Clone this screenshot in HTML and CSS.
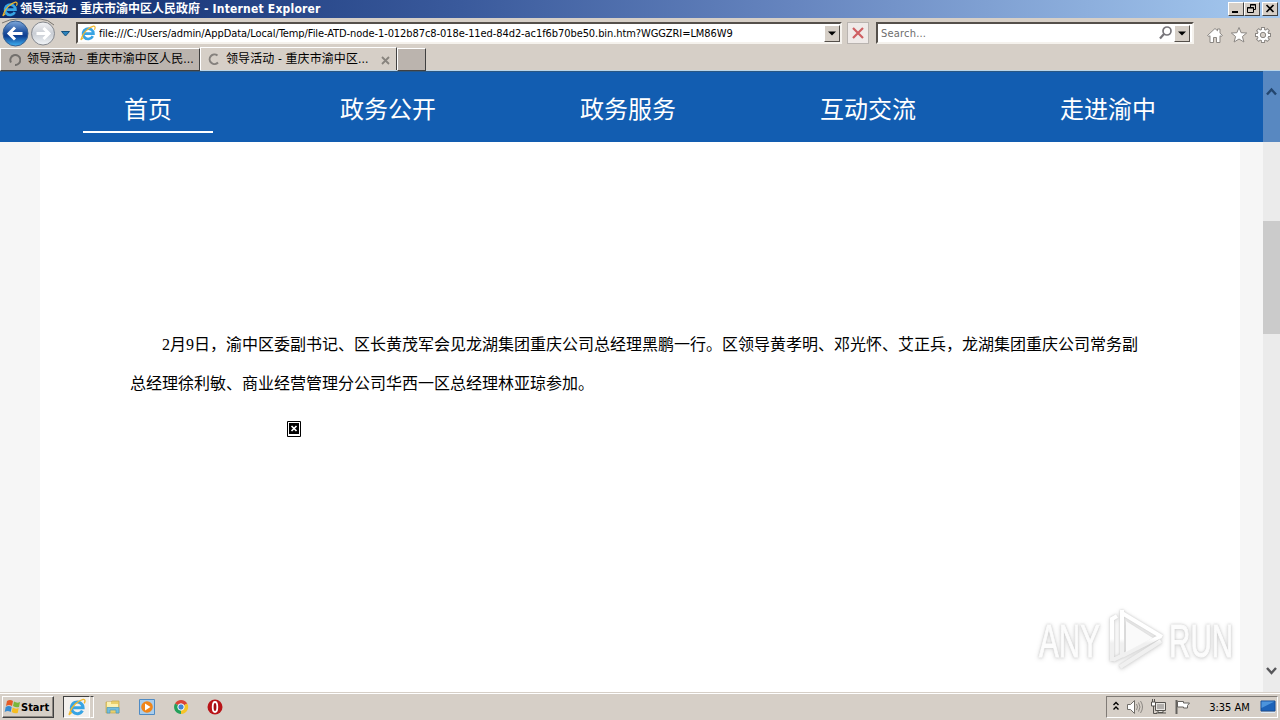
FILE: index.html
```html
<!DOCTYPE html>
<html lang="zh-CN">
<head>
    <meta charset="UTF-8">
    <meta name="viewport" content="width=device-width, initial-scale=1.0">
    <title>领导活动 - 重庆市渝中区人民政府</title>
    <link rel="stylesheet" href="styles.css">
</head>
<body>
    <svg width="0" height="0" class="defs">
        <defs>
            <linearGradient id="blueBall" x1="0" y1="0" x2="0" y2="1">
                <stop offset="0" stop-color="#7fa9dc"/>
                <stop offset=".45" stop-color="#1d4f9e"/>
                <stop offset=".6" stop-color="#0d3d90"/>
                <stop offset="1" stop-color="#3fb2f4"/>
            </linearGradient>
            <linearGradient id="greyBall" x1="0" y1="0" x2="0" y2="1">
                <stop offset="0" stop-color="#f4f4f6"/>
                <stop offset=".5" stop-color="#c9cdd4"/>
                <stop offset="1" stop-color="#f2f5f8"/>
            </linearGradient>
            <symbol id="ie" viewBox="0 0 16 16">
                <path d="M12.800 11.200A5.200 5.200 0 1 1 13.400 8.600H4" fill="none" stroke="#38a4e4" stroke-width="2.700"/>
                <path d="M3.400 12.600C.8 15.200.6 15.400 1.600 12.800C3.200 7.600 9 2.200 13.400 1.200c2.200-.3 2 1.800 1 3.600" fill="none" stroke="#f1b82d" stroke-width="1.200"/>
            </symbol>
        </defs>
    </svg>

    <div class="titlebar">
        <svg class="title-icon" width="16" height="16"><use href="#ie"/></svg>
        <span class="title-text">领导活动 - 重庆市渝中区人民政府<span class="title-app"> - Internet Explorer</span></span>
        <div class="win-buttons">
            <span class="win-btn"><svg width="14" height="12"><path d="M3 9h6" stroke="#000" stroke-width="2"/></svg></span>
            <span class="win-btn"><svg width="14" height="12"><path d="M5.500 4V1.500h5v5H9M5 2h6M2.500 4.500h6v5h-6zM2 5h7" fill="none" stroke="#000"/></svg></span>
            <span class="win-btn gap"><svg width="14" height="12"><path d="M3.500 2l7 7M10.500 2l-7 7" stroke="#000" stroke-width="1.700"/></svg></span>
        </div>
    </div>

    <div class="navbar">
        <svg class="nav-buttons" width="76" height="29" viewBox="0 0 76 29">
            <path d="M2 5Q10 1 17 1h23q8 0 14 6" fill="none" stroke="#77746f"/>
            <circle cx="15.500" cy="15.500" r="12.500" fill="url(#blueBall)" stroke="#365f91"/>
            <path d="M22.500 15.500H10M15 9.500l-6 6 6 6" fill="none" stroke="#fff" stroke-width="3"/>
            <circle cx="43" cy="15.500" r="11.500" fill="url(#greyBall)" stroke="#85888e"/>
            <path d="M36.500 15.500H48M43.500 10l5.500 5.500-5.500 5.500" fill="none" stroke="#fff" stroke-width="3"/>
            <path d="M61.500 13.500h8l-4 4.500z" fill="#2c83bd" stroke="#15527e"/>
        </svg>
        <div class="address">
            <svg width="16" height="16"><use href="#ie"/></svg>
            <span class="address-text">file:///C:/Users/admin/AppData/Local/Temp/File-ATD-node-1-012b87c8-018e-11ed-84d2-ac1f6b70be50.bin.htm?WGGZRI=LM86W9</span>
            <span class="drop"><svg width="14" height="15"><path d="M3 5.500h8L7 9.500z"/></svg></span>
        </div>
        <span class="stop"><svg width="20" height="20"><path d="M5 5l10 10M15 5L5 15" stroke="#ce5f62" stroke-width="2.200"/></svg></span>
        <div class="search">
            <span class="search-text">Search...</span>
            <svg width="14" height="14"><circle cx="8" cy="5" r="4" fill="none" stroke="#77757a" stroke-width="1.700"/><path d="M5 8L1 12.500" stroke="#77757a" stroke-width="2.200"/></svg>
            <span class="drop"><svg width="14" height="15"><path d="M3 5.500h8L7 9.500z"/></svg></span>
        </div>
        <div class="tools">
            <svg width="18" height="18"><path d="M1.500 9.500L9 2.500l2.500 2.300V3h2.500v4.200l2.500 2.300-1.500 1-1-.8v6.800h-3.500v-5h-3v5H4V9.700l-1 .8z" fill="#fff" stroke="#8b8783"/></svg>
            <svg width="18" height="18"><path d="M9 1.500l2.100 5.200 5.600.3-4.300 3.500 1.500 5.500L9 13l-4.900 3 1.500-5.500L1.300 7l5.600-.3z" fill="#fff" stroke="#8b8783"/></svg>
            <svg width="18" height="18">
                <g fill="none">
                    <path d="M9 1v16M1 9h16M3.300 3.300l11.400 11.400M14.700 3.300L3.300 14.700" stroke="#8b8783" stroke-width="4"/>
                    <circle cx="9" cy="9" r="6.200" fill="#8b8783"/>
                    <path d="M9 2v14M2 9h14M4 4l10 10M14 4L4 14" stroke="#fff" stroke-width="2.200"/>
                </g>
                <circle cx="9" cy="9" r="5.300" fill="#fff"/>
                <circle cx="9" cy="9" r="2.700" fill="#d6cfc7" stroke="#8b8783"/>
            </svg>
        </div>
    </div>

    <div class="tabs">
        <div class="tab tab-back">
            <svg width="12" height="12"><path d="M2 8.500A5 5 0 1 1 6 11" fill="none" stroke="#73706d" stroke-width="2"/></svg>
            <span>领导活动 - 重庆市渝中区人民...</span>
        </div>
        <div class="tab tab-front">
            <svg width="12" height="12"><path d="M10 9.500A4.800 4.800 0 1 1 9.500 2.500" fill="none" stroke="#85817d" stroke-width="2"/></svg>
            <span>领导活动 - 重庆市渝中区...</span>
            <svg class="tab-close" width="9" height="9"><path d="M1 1l7 7M8 1L1 8" stroke="#88847e" stroke-width="1.800"/></svg>
        </div>
        <div class="tab tab-new"></div>
    </div>

    <div class="viewport">
        <div class="page">
            <nav class="menu">
                <a class="active">首页</a>
                <a>政务公开</a>
                <a>政务服务</a>
                <a>互动交流</a>
                <a>走进渝中</a>
            </nav>
            <div class="content">
                <p class="first">2月9日，渝中区委副书记、区长黄茂军会见龙湖集团重庆公司总经理黑鹏一行。区领导黄孝明、邓光怀、艾正兵，龙湖集团重庆公司常务副</p>
                <p>总经理徐利敏、商业经营管理分公司华西一区总经理林亚琼参加。</p>
                <svg class="missing" width="14" height="16"><path d="M.5.500h13v15H.5z" fill="#fff" stroke="#000"/><path d="M2 2h10v11H2z"/><path d="M4.500 5l5 5M9.500 5l-5 5" stroke="#fff" stroke-width="1.700"/></svg>
            </div>
        </div>
        <div class="scrollbar">
            <div class="scroll-top"><svg width="17" height="17"><path d="M4 11.500L8.500 6.500l4.500 5" fill="none" stroke="#23466f" stroke-width="2.400"/></svg></div>
            <div class="scroll-thumb"></div>
            <svg class="scroll-down" width="17" height="17"><path d="M4 6l4.500 5L13 6" fill="none" stroke="#57575a" stroke-width="2.400"/></svg>
        </div>
        <div class="watermark">
            <span>ANY</span>
            <svg width="60" height="64" viewBox="0 0 60 64">
                <defs>
                    <linearGradient id="fade" gradientUnits="userSpaceOnUse" x1="0" y1="0" x2="0" y2="64">
                        <stop offset=".48" stop-color="#fff"/>
                        <stop offset=".55" stop-color="#f0f0f0"/>
                    </linearGradient>
                </defs>
                <path d="M15 5L55 29M15 2v47M15 48l39-20M5 53V11l5-3M6 52l48-24M13 59l41-26" fill="none" stroke="url(#fade)" stroke-width="4"/>
                <path d="M19 13v31l27-14z" fill="#fafafa"/>
            </svg>
            <span>RUN</span>
        </div>
    </div>

    <div class="taskbar">
        <div class="start">
            <svg width="17" height="16"><path d="M3 2q3-2 6 0L8 7Q5 5 2 7z" fill="#e65b25"/><path d="M10 2.500q3 2 6 .5l-1 5q-3 1-6-1z" fill="#79b63b"/><path d="M1.700 8q3-2 6 0l-1 5q-3-2-6 0z" fill="#368bd1"/><path d="M8.700 8.500q3 2 6 .5l-1 5q-3 1-6-1z" fill="#f6bd21"/></svg>
            <span>Start</span>
        </div>
        <div class="task-active"><svg width="18" height="18"><use href="#ie"/></svg></div>
        <div class="task-edge"></div>
        <div class="launchers">
            <svg width="18" height="18"><path d="M2 4h5l1-1h7v12H2z" fill="#e9cf6c" stroke="#c6a84b" stroke-width=".7"/><path d="M3 4h4v2h7v3H3z" fill="#fbf0b0"/><path d="M3 15V9.500h12V15h-3v-3H6v3z" fill="#72bdde" stroke="#4c9abf" stroke-width=".7"/></svg>
            <svg width="18" height="18"><path d="M1.500 1.500h15v15h-15z" fill="#a9cdec" stroke="#4f8bc4"/><circle cx="9" cy="9" r="5.800" fill="#f08519"/><path d="M7 5.500v7L12.500 9z" fill="#fff"/></svg>
            <svg width="18" height="18"><path d="M9 9L3 5.500A7 7 0 0 1 15.200 5.500z" fill="#db4437"/><path d="M9 9l6.200-3.500A7 7 0 0 1 9 16z" fill="#f6c427"/><path d="M9 9v7A7 7 0 0 1 3 5.500z" fill="#24a05a"/><circle cx="9" cy="9" r="3.200" fill="#4285d5" stroke="#fff"/></svg>
            <svg width="18" height="18"><circle cx="9" cy="9" r="7.500" fill="#b91418"/><ellipse cx="9" cy="9" rx="2.300" ry="5" fill="#a30d13" stroke="#fff" stroke-width="1.800"/></svg>
        </div>
        <div class="tray">
            <svg width="8" height="12"><path d="M1.500 4L4 1.500 6.500 4M1.500 8.500L4 6l2.500 2.500" fill="none" stroke="#000" stroke-width="1.400"/></svg>
            <svg width="18" height="16"><path d="M1.500 5.500h3l4-4v13l-4-4h-3z" fill="#fff" stroke="#706d68"/><path d="M10.500 5q2 3 0 6M12.500 3.500q3 4.500 0 9M14.500 2q4 6 0 12" fill="none" stroke="#8c8883"/></svg>
            <svg width="18" height="16"><path d="M5.500 3.500h10v8h-10zM8 11.500v2h5v-2M6 14h10" fill="#e8e6e2" stroke="#55524e"/><path d="M7 5h7v5H7z" fill="#b2afac"/><path d="M1.500 3v4h4V3zM2.500 3V0M4.500 3V0" fill="#fff" stroke="#55524e"/><path d="M3.500 7v7.500H7" fill="none" stroke="#55524e"/></svg>
            <svg width="18" height="16"><path d="M2.500 1v14" stroke="#65625e" stroke-width="2"/><path d="M3.500 2.500h6v1.500h6l-2 2.500V9h-4V8h-6z" fill="#fff" stroke="#65625e"/></svg>
            <span class="clock">3:35 AM</span>
            <svg width="16" height="14"><path d="M1 1h14v10H1z" fill="#1d63b9" stroke="#164d93"/><path d="M1.500 1.500h13L1.500 8z" fill="#4c94dc"/><path d="M1 12.500h14" stroke="#dce9f5"/></svg>
        </div>
    </div>
</body>
</html>
```
FILE: styles.css
```css
* {
    box-sizing: border-box;
}
body {
    display: flex;
    flex-direction: column;
    width: 1280px;
    height: 720px;
    margin: 0;
    overflow: hidden;
    background: #d6cfc7;
    color: #000;
    font-family: "DejaVu Sans Condensed", "DejaVu Sans", "Noto Sans CJK SC", sans-serif;
    font-size: 11px;
}
svg {
    display: block;
    flex: none;
}
.defs {
    position: absolute;
}
/* window title */
.titlebar {
    display: flex;
    align-items: center;
    height: 18px;
    padding: 0 2px;
    background: linear-gradient(to right, #0c2a6c, #3a5a9c 36%, #6685bf 62%, #a6caf0);
    color: #fff;
    font-weight: bold;
    white-space: nowrap;
}
.title-text {
    flex: 1;
    margin-left: 2px;
    font-size: 12px;
    line-height: 18px;
}
.title-app {
    letter-spacing: .2px;
}
.win-buttons {
    display: flex;
}
.win-btn {
    width: 16px;
    height: 14px;
    background: #d6cfc7;
    border: 1px solid;
    border-color: #fff #404040 #404040 #fff;
}
.gap {
    margin-left: 2px;
}
/* address row */
.navbar {
    display: flex;
    align-items: flex-start;
    height: 29px;
}
.address, .search {
    display: flex;
    align-items: center;
    height: 22px;
    margin-top: 4px;
    background: #fff;
    border: 2px solid;
    border-color: #55504b #f5f2ed #f5f2ed #55504b;
}
.address {
    width: 766px;
    padding-left: 2px;
}
.address-text {
    flex: 1;
    margin-left: 3px;
    letter-spacing: -.08px;
    white-space: nowrap;
    overflow: hidden;
}
.drop {
    width: 16px;
    height: 17px;
    background: #d6cfc7;
    border: 1px solid;
    border-color: #fff #55504b #55504b #fff;
}
.stop {
    width: 22px;
    height: 22px;
    margin: 4px 7px 0 5px;
    background: #efeae8;
    border: 1px solid #b9b4b0;
}
.search {
    width: 318px;
    padding: 0 2px 0 3px;
}
.search-text {
    flex: 1;
    color: #6d6d6d;
    letter-spacing: .2px;
}
.search .drop {
    margin-left: 1px;
}
.tools {
    display: flex;
    gap: 6px;
    margin: 8px 0 0 12px;
}
/* tabs */
.tabs {
    display: flex;
    height: 24px;
    border-bottom: 1px solid #b9d4e8;
}
.tab {
    display: flex;
    align-items: center;
    height: 23px;
    font-size: 12px;
    white-space: nowrap;
    border: 1px solid;
    border-color: #fff #404040 #404040 #fff;
}
.tab span {
    margin-left: 6px;
    line-height: 21px;
    letter-spacing: .1px;
}
.tab-back {
    width: 200px;
    margin-top: 1px;
    padding-left: 8px;
    background: #bbb4ae;
}
.tab-front {
    width: 197px;
    padding-left: 7px;
    border-bottom: 0;
}
.tab-close {
    margin: 2px 6px 0 auto;
}
.tab-new {
    width: 29px;
    margin-top: 1px;
    background: #bbb4ae;
}
/* web page */
.viewport {
    display: flex;
    position: relative;
    height: 621px;
    background: #f6f6f6;
}
.page {
    width: 1263px;
    font-family: "Noto Sans CJK SC", sans-serif;
}
.menu {
    display: flex;
    height: 71px;
    padding: 14px 0 0 28px;
    background: #125db1;
    border-top: 1px solid #2a5783;
}
.menu a {
    width: 130px;
    height: 47px;
    margin: 0 55px;
    color: #fff;
    font-size: 24px;
    line-height: 43px;
    text-align: center;
    white-space: nowrap;
}
.menu .active {
    border-bottom: 2px solid #fff;
}
.content {
    width: 1200px;
    height: 550px;
    margin-left: 40px;
    padding: 183px 0 0 90px;
    background: #fff;
}
.content p {
    margin: 0;
    font-family: "Liberation Serif", "Noto Sans CJK SC", sans-serif;
    font-size: 16px;
    line-height: 39px;
    white-space: nowrap;
}
.content .first {
    text-indent: 32px;
}
.missing {
    margin: 18px 0 0 157px;
}
.scrollbar {
    display: flex;
    flex-direction: column;
    width: 17px;
    background: #ebebeb;
}
.scroll-top {
    height: 71px;
    padding-top: 12px;
    background: #5888c1;
}
.scroll-thumb {
    height: 113px;
    margin-top: 79px;
    background: #cbcbcb;
}
.scroll-down {
    margin-top: auto;
    margin-bottom: 13px;
}
/* lies over the page */
.watermark {
    display: flex;
    align-items: center;
    position: absolute;
    left: 1039px;
    top: 536px;
    height: 66px;
    color: #fcfcfc;
    font-family: "Liberation Sans Narrow", "Liberation Sans", sans-serif;
    font-size: 47px;
    filter: drop-shadow(0 0 1px #ccc) drop-shadow(0 1px 2px #ddd);
}
.watermark span {
    width: 65px;
    transform: scaleX(.63);
    transform-origin: left;
    -webkit-text-stroke: 1px #fcfcfc;
}
.watermark svg {
    margin: 0 2px 0 3px;
}
/* taskbar */
.taskbar {
    display: flex;
    align-items: center;
    height: 28px;
    padding: 1px 2px 0;
    border-top: 1px solid #d6cfc7;
    box-shadow: inset 0 1px #fff;
}
.start {
    display: flex;
    align-items: center;
    width: 52px;
    height: 22px;
    padding-left: 1px;
    font-weight: bold;
    border: 1px solid;
    border-color: #fff #404040 #404040 #fff;
    box-shadow: inset -1px -1px #8c8782;
}
.task-active {
    display: flex;
    align-items: center;
    justify-content: center;
    width: 27px;
    height: 22px;
    margin-left: 9px;
    background: #f3f0ed;
    border: 1px solid;
    border-color: #404040 #fff #fff #404040;
}
.task-edge {
    width: 4px;
    height: 22px;
    border: 1px solid;
    border-color: #404040 #fff #fff #d6cfc7;
}
.launchers {
    display: flex;
    gap: 16px;
    margin-left: 10px;
}
.tray {
    display: flex;
    align-items: center;
    width: 172px;
    height: 22px;
    margin-left: auto;
    padding: 0 1px 0 5px;
    border: 1px solid;
    border-color: #807b76 #fff #fff #807b76;
}
.tray svg + svg {
    margin-left: 6px;
}
.clock {
    margin: 0 auto;
    padding-left: 7px;
    white-space: nowrap;
}
```
